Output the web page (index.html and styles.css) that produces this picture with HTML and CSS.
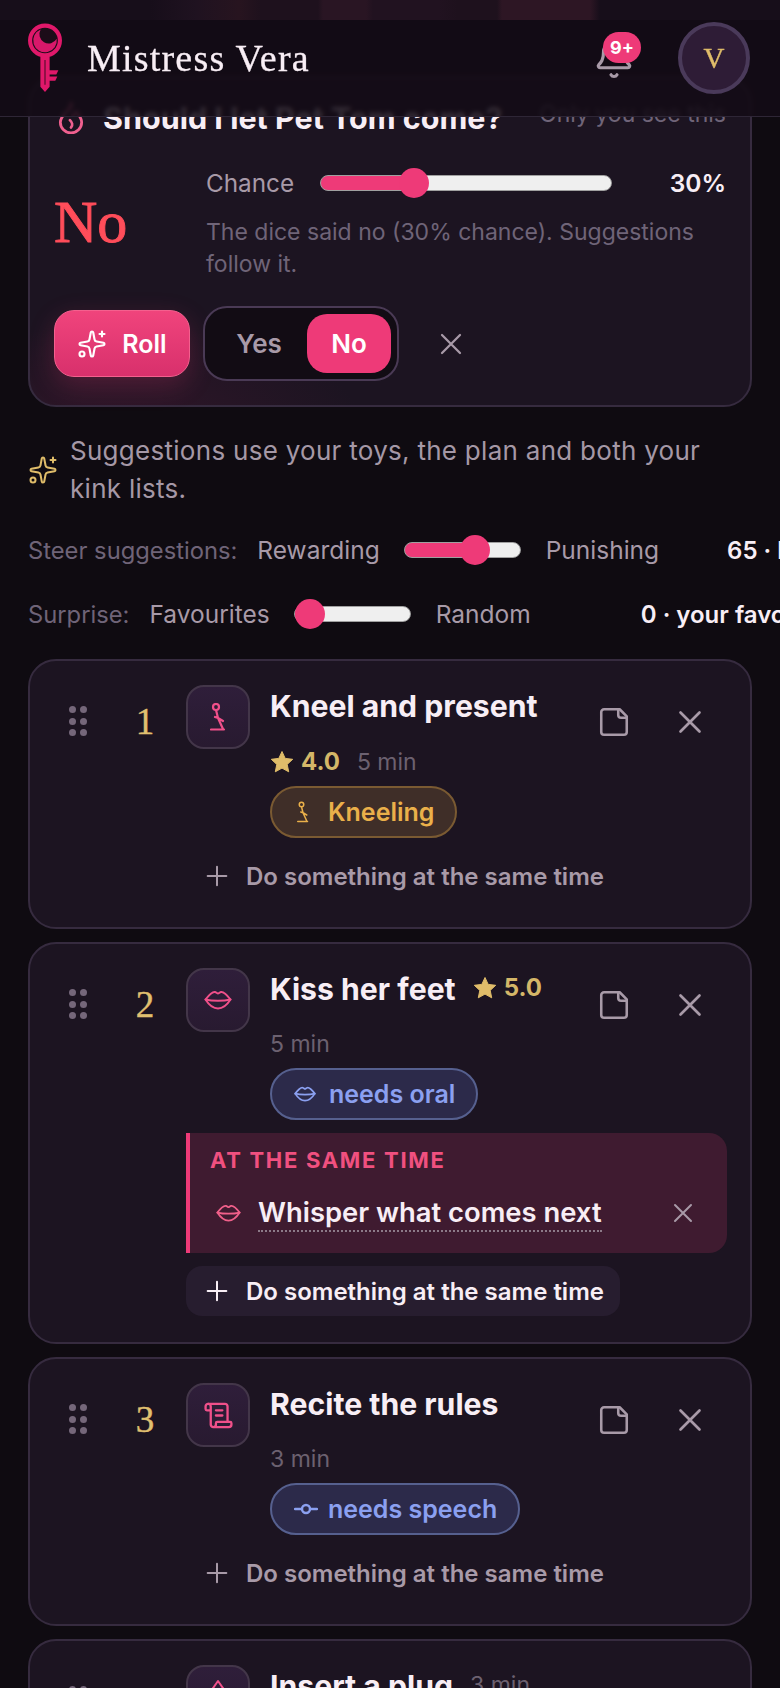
FILE: index.html
```html
<!DOCTYPE html>
<html lang="en">
<head>
    <meta charset="UTF-8">
    <title>Mistress Vera</title>
    <meta name="viewport" content="width=device-width, initial-scale=1.0">
    <link rel="stylesheet" href="styles.css">
</head>
<body>
    <svg class="sprite" width="0" height="0">
        <symbol id="i-x" viewBox="0 0 24 24"><path d="M18 6 6 18M6 6l12 12"/></symbol>
        <symbol id="i-plus" viewBox="0 0 24 24"><path d="M5 12h14M12 5v14"/></symbol>
        <symbol id="i-note" viewBox="0 0 24 24"><path d="M16 3H5a2 2 0 0 0-2 2v14a2 2 0 0 0 2 2h14a2 2 0 0 0 2-2V8Z"/><path d="M15 3v4a2 2 0 0 0 2 2h4"/></symbol>
        <symbol id="i-star" viewBox="0 0 24 24"><path class="solid" d="M12 1.500l3.200 6.900 7.500.9-5.500 5.100 1.500 7.400-6.700-3.700-6.700 3.700 1.500-7.400L1.300 9.300l7.500-.9z"/></symbol>
        <symbol id="i-sparkles" viewBox="0 0 24 24"><path d="M11.017 2.814a1 1 0 0 1 1.966 0l1.051 5.558a2 2 0 0 0 1.594 1.594l5.558 1.051a1 1 0 0 1 0 1.966l-5.558 1.051a2 2 0 0 0-1.594 1.594l-1.051 5.558a1 1 0 0 1-1.966 0l-1.051-5.558a2 2 0 0 0-1.594-1.594l-5.558-1.051a1 1 0 0 1 0-1.966l5.558-1.051a2 2 0 0 0 1.594-1.594z"/><path d="M20 2v4M22 4h-4"/><circle cx="4" cy="20" r="2"/></symbol>
        <symbol id="i-lips" viewBox="0 0 28 20"><path d="M1.500 9.500C5 5 9 1.500 11 2c1.500.4 2.300 1.500 3 1.500S15.500 2.400 17 2c2-.5 6 3 9.500 7.500C23 15 18 18.500 14 18.500S5 15 1.500 9.500Z"/><path d="M1.500 9.500c4 1 8.500 1.300 12.500 1.300s8.500-.3 12.500-1.300"/></symbol>
        <symbol id="i-kneel" viewBox="0 0 16 28"><circle cx="6" cy="4" r="3"/><path d="M6 7l2 8 5 3M8 15l-3-1M8 15l5 11M1 26.500h13"/></symbol>
    </svg>

    <header class="topbar">
        <div class="brand">
            <svg class="key" viewBox="0 0 34 68">
                <circle cx="17" cy="17" r="14.500" fill="#1c0c18" stroke="#e0186a" stroke-width="4"/>
                <path d="M12.800 6.300A11.500 11.500 0 1 0 28.400 15.400 9 9 0 0 1 12.800 6.300Z" fill="#d8186a"/>
                <path d="M12.500 33h9v13H30l-2 4h-6.500v2H29l-2 4h-5.500v6L17 67l-4.500-5Z" fill="#e0186a"/>
                <path d="M17 36v24" stroke="#7a0f3c" stroke-width="1.500"/>
            </svg>
            <span class="brand-name">Mistress Vera</span>
        </div>
        <div class="bell">
            <svg class="ico bell-ico" viewBox="0 0 24 24"><path d="M10.268 21a2 2 0 0 0 3.464 0"/><path d="M3.262 15.326A1 1 0 0 0 4 17h16a1 1 0 0 0 .74-1.673C19.410 13.956 18 12.499 18 8A6 6 0 0 0 6 8c0 4.499-1.411 5.956-2.738 7.326"/></svg>
            <span class="badge">9+</span>
        </div>
        <div class="avatar">V</div>
    </header>

    <main class="page">
        <section class="card decide">
            <div class="decide-head">
                <svg class="ico flame" viewBox="0 0 24 30"><path d="M12 1c1 4-2 6-5 9-3 3-5 6-5 9a10 10 0 0 0 20 0c0-4-3-7-5-10-1 2-2 3-4 3"/><path d="M11 17c2 2 3 5 1 7"/></svg>
                <h2>Should I let Pet Tom come?</h2>
                <span class="private">Only you see this</span>
            </div>
            <div class="dice">
                <div class="verdict">No</div>
                <div class="dice-info">
                    <div class="chance">
                        <span class="chance-label">Chance</span>
                        <input class="range range-lg" type="range" min="0" max="100" value="30" style="--fill:32%">
                        <span class="chance-val">30%</span>
                    </div>
                    <p class="dice-note">The dice said no (30% chance). Suggestions follow it.</p>
                </div>
            </div>
            <div class="decide-actions">
                <button class="roll"><svg class="ico"><use href="#i-sparkles"/></svg>Roll</button>
                <div class="segment">
                    <button class="seg-btn">Yes</button>
                    <button class="seg-btn seg-on">No</button>
                </div>
                <button class="icon-btn clear"><svg class="ico"><use href="#i-x"/></svg></button>
            </div>
        </section>

        <div class="hint">
            <svg class="ico"><use href="#i-sparkles"/></svg>
            <p>Suggestions use your toys, the plan and both your kink lists.</p>
        </div>

        <div class="steer">
            <span class="steer-name">Steer suggestions:</span>
            <span class="steer-end">Rewarding</span>
            <input class="range range-sm" type="range" min="0" max="100" value="65" style="--fill:60%">
            <span class="steer-end">Punishing</span>
            <span class="steer-val steer-val-a">65 · leaning punishing</span>
        </div>
        <div class="steer steer-2">
            <span class="steer-name">Surprise:</span>
            <span class="steer-end">Favourites</span>
            <input class="range range-sm" type="range" min="0" max="100" value="0" style="--fill:10%">
            <span class="steer-end">Random</span>
            <span class="steer-val steer-val-b">0 · your favourites</span>
        </div>

        <ol class="tasks">
            <li class="card task">
                <div class="rail"><span class="dots"><i></i><i></i><i></i><i></i><i></i><i></i></span><span class="num">1</span></div>
                <div class="task-main">
                    <div class="task-top">
                        <div class="task-icon"><svg class="ico kneel"><use href="#i-kneel"/></svg></div>
                        <div class="task-info">
                            <div class="task-line">
                                <h3>Kneel and present</h3>
                                <span class="rating"><svg class="star"><use href="#i-star"/></svg>4.0</span>
                                <span class="mins">5 min</span>
                            </div>
                            <span class="chip chip-amber"><svg class="ico"><use href="#i-kneel"/></svg>Kneeling</span>
                        </div>
                        <div class="task-actions">
                            <button class="icon-btn"><svg class="ico"><use href="#i-note"/></svg></button>
                            <button class="icon-btn"><svg class="ico"><use href="#i-x"/></svg></button>
                        </div>
                    </div>
                    <button class="add"><svg class="ico"><use href="#i-plus"/></svg>Do something at the same time</button>
                </div>
            </li>

            <li class="card task">
                <div class="rail"><span class="dots"><i></i><i></i><i></i><i></i><i></i><i></i></span><span class="num">2</span></div>
                <div class="task-main">
                    <div class="task-top">
                        <div class="task-icon"><svg class="ico lips"><use href="#i-lips"/></svg></div>
                        <div class="task-info">
                            <div class="task-line">
                                <h3>Kiss her feet</h3>
                                <span class="rating"><svg class="star"><use href="#i-star"/></svg>5.0</span>
                                <span class="mins">5 min</span>
                            </div>
                            <span class="chip chip-blue"><svg class="ico chip-lips"><use href="#i-lips"/></svg>needs oral</span>
                        </div>
                        <div class="task-actions">
                            <button class="icon-btn"><svg class="ico"><use href="#i-note"/></svg></button>
                            <button class="icon-btn"><svg class="ico"><use href="#i-x"/></svg></button>
                        </div>
                    </div>
                    <div class="same-time">
                        <div class="same-label">AT THE SAME TIME</div>
                        <div class="same-row">
                            <svg class="ico same-lips"><use href="#i-lips"/></svg>
                            <span class="same-name">Whisper what comes next</span>
                            <button class="icon-btn same-x"><svg class="ico"><use href="#i-x"/></svg></button>
                        </div>
                    </div>
                    <button class="add add-on"><svg class="ico"><use href="#i-plus"/></svg>Do something at the same time</button>
                </div>
            </li>

            <li class="card task">
                <div class="rail"><span class="dots"><i></i><i></i><i></i><i></i><i></i><i></i></span><span class="num">3</span></div>
                <div class="task-main">
                    <div class="task-top">
                        <div class="task-icon">
                            <svg class="ico scroll" viewBox="0 0 24 24"><path d="M15 12h-5M15 8h-5M19 17V5a2 2 0 0 0-2-2H4"/><path d="M8 21h12a2 2 0 0 0 2-2v-1a1 1 0 0 0-1-1H11a1 1 0 0 0-1 1v1a2 2 0 1 1-4 0V5a2 2 0 1 0-4 0v2a1 1 0 0 0 1 1h3"/></svg>
                        </div>
                        <div class="task-info">
                            <div class="task-line">
                                <h3>Recite the rules</h3>
                                <span class="mins">3 min</span>
                            </div>
                            <span class="chip chip-blue"><svg class="ico chip-speech" viewBox="0 0 24 24"><circle cx="12" cy="12" r="4"/><path d="M1 12h7M16 12h7"/></svg>needs speech</span>
                        </div>
                        <div class="task-actions">
                            <button class="icon-btn"><svg class="ico"><use href="#i-note"/></svg></button>
                            <button class="icon-btn"><svg class="ico"><use href="#i-x"/></svg></button>
                        </div>
                    </div>
                    <button class="add"><svg class="ico"><use href="#i-plus"/></svg>Do something at the same time</button>
                </div>
            </li>

            <li class="card task">
                <div class="rail"><span class="dots"><i></i><i></i><i></i><i></i><i></i><i></i></span><span class="num">4</span></div>
                <div class="task-main">
                    <div class="task-top">
                        <div class="task-icon"><svg class="ico plug" viewBox="0 0 24 36"><path d="M12 2l7 10-4 6h-6l-4-6zM12 18v8M5 30h14"/></svg></div>
                        <div class="task-info">
                            <div class="task-line">
                                <h3>Insert a plug</h3>
                                <span class="mins">3 min</span>
                            </div>
                        </div>
                        <div class="task-actions">
                            <button class="icon-btn"><svg class="ico"><use href="#i-note"/></svg></button>
                            <button class="icon-btn"><svg class="ico"><use href="#i-x"/></svg></button>
                        </div>
                    </div>
                </div>
            </li>
        </ol>
    </main>
</body>
</html>
```

FILE: styles.css
```css
* { box-sizing: border-box; }
html, body { margin: 0; height: 1688px; overflow: hidden; }
body { background: #0f0b11; color: #f8eef5; font-family: Inter, "Noto Sans", sans-serif; }
h2, h3, p { margin: 0; }
button { font-family: inherit; border: none; background: none; color: inherit; padding: 0; cursor: pointer; }
.sprite { position: absolute; }

.ico { fill: none; stroke: currentColor; stroke-width: 2; stroke-linecap: round; stroke-linejoin: round; }
.solid { fill: currentColor; stroke: currentColor; stroke-width: 1; }

/* header sits over the scrolled page */
.topbar {
    position: absolute; top: 0; left: 0; right: 0; z-index: 5;
    height: 117px; padding: 0 30px 0 27px;
    display: flex; align-items: center;
    border-bottom: 1px solid #2e2636;
    background:
        linear-gradient(to right, #170e1a 150px, #1f1220 196px, #27141f 239px, #1e111d 261px, #1e111d 318px, #291523 323px, #291523 366px, #211220 373px, #211220 438px, #1e111d 458px, #1e111d 497px, #2d1624 502px, #2d1624 590px, #170e1a 600px) top / 100% 20px no-repeat,
        rgba(19, 12, 22, 0.87);
    backdrop-filter: blur(2px);
}
.brand { display: flex; align-items: center; gap: 24px; flex: 1; }
.key { width: 36px; height: 70px; }
.brand-name { font-family: "Liberation Serif", serif; font-size: 38px; letter-spacing: 1.200px; color: #f8eef5; -webkit-text-stroke: 0.3px #f8eef5; }
.bell { position: relative; width: 42px; height: 42px; margin-right: 43px; margin-top: 2px; color: #a89aa8; }
.bell-ico { width: 42px; height: 42px; stroke-width: 1.800; }
.badge {
    position: absolute; top: -6px; left: 10px; width: 38px; height: 31px; border-radius: 16px;
    background: #ee3a78; color: #fff; font-size: 18px; font-weight: 700;
    display: flex; align-items: center; justify-content: center;
}
.avatar {
    width: 72px; height: 72px; border-radius: 50%;
    background: #2e1c36; border: 4px solid #4a3a5a; color: #e0bd6a;
    font-family: "Liberation Serif", serif; font-size: 29px; -webkit-text-stroke: 0.4px #e0bd6a;
    display: flex; align-items: center; justify-content: center;
}

.page { padding: 76px 28px 0 28px; width: 780px; }
.card { background: #1c1421; border: 2px solid #362b3f; border-radius: 28px; }

/* decision card */
.decide { padding: 22px 24px 24px; background: radial-gradient(240px 100px at 90px 345px, #301629, transparent), #1c1421; }
.decide-head { display: flex; align-items: center; height: 36px; }
.flame { width: 26px; height: 32px; margin: 0 19px 0 4px; color: #f0608f; stroke-width: 2.600; flex: none; }
.decide-head h2 { font-size: 30.500px; font-weight: 700; line-height: 36px; white-space: nowrap; }
.private { margin-left: auto; font-size: 23px; color: #6f6478; margin-bottom: 8px; white-space: nowrap; }
.dice { display: flex; align-items: center; margin-top: 31px; }
.verdict {
    width: 152px; flex: none; padding-bottom: 4px;
    font-family: "Liberation Serif", serif; font-size: 60px; line-height: 1; color: #ff4d5a; -webkit-text-stroke: 0.9px #ff4d5a;
}
.dice-info { flex: 1; }
.chance { display: flex; align-items: center; height: 32px; }
.chance-label { width: 114px; font-size: 24.300px; color: #a89aa8; }
.chance-val { margin-left: auto; font-size: 24.500px; font-weight: 600; color: #f8eef5; }
.dice-note { margin-top: 17px; font-size: 23px; line-height: 32px; color: #6f6478; }
.decide-actions { display: flex; align-items: center; margin-top: 26px; }
.roll {
    width: 136px; height: 67px; border-radius: 20px;
    display: flex; align-items: center; justify-content: center; gap: 15px;
    background: linear-gradient(#f0447c, #d8306c); border: 1px solid #f4608e;
    box-shadow: 0 8px 26px rgba(238, 58, 120, 0.22);
    color: #fff; font-size: 25px; font-weight: 600;
}
.roll .ico { width: 30px; height: 30px; stroke-width: 1.700; }
.segment {
    margin-left: 13px; height: 75px; width: 196px; padding: 6px;
    display: flex; align-items: center;
    background: #120c14; border: 2px solid #4a3a55; border-radius: 24px;
}
.seg-btn { flex: 1; height: 59px; font-size: 26px; font-weight: 600; color: #a89aa8; border-radius: 20px; }
.seg-on { flex: none; width: 84px; background: #ee3a78; color: #fff; }
.icon-btn { width: 54px; height: 54px; display: flex; align-items: center; justify-content: center; color: #a89aa8; flex: none; }
.clear { margin-left: 25px; }
.clear .ico { width: 36px; height: 36px; stroke-width: 1.500; }

/* hint and steering */
.hint { display: flex; align-items: center; gap: 12px; margin-top: 25px; color: #a598a6; }
.hint .ico { width: 30px; height: 30px; flex: none; color: #e0bd6a; stroke-width: 1.600; }
.hint p { font-size: 26px; line-height: 38px; letter-spacing: 0.280px; }
.steer { display: flex; align-items: center; height: 32px; margin-top: 26px; white-space: nowrap; font-size: 24px; }
.steer-2 { margin-top: 32px; }
.steer-name { color: #6f6478; margin-right: 20px; font-size: 23.750px; }
.steer-end { color: #a89aa8; font-size: 24.500px; }
.steer-val { font-weight: 600; color: #f8eef5; }
.steer-val-a { margin-left: 68px; }
.steer-val-b { margin-left: 110px; }

.range { -webkit-appearance: none; appearance: none; display: block; height: 30px; margin: 0; background: transparent; flex: none; }
.range-lg { width: 292px; }
.range-sm { width: 117px; margin: 0 25px 0 24px; }
.range::-webkit-slider-runnable-track {
    height: 16px; border-radius: 8px; border: 1px solid #a0a0a0;
    background: linear-gradient(to right, #ee3a78 var(--fill), #efefef var(--fill));
}
.range::-webkit-slider-thumb {
    -webkit-appearance: none; width: 30px; height: 30px; margin-top: -8px;
    border-radius: 50%; background: #ee3a78;
}

/* plan */
.tasks { list-style: none; margin: 29px 0 0; padding: 0; display: flex; flex-direction: column; gap: 13px; }
.task { display: flex; padding: 24px 23px 26px 0; }
.rail { width: 156px; flex: none; display: flex; align-items: flex-start; padding: 21px 0 0 39px; }
.dots { width: 18px; display: grid; grid-template-columns: 7px 7px; gap: 4.700px 3.500px; }
.dots i { width: 7px; height: 7px; border-radius: 50%; background: #75677a; }
.num {
    margin-left: 48px; margin-top: -6px; width: 20px; text-align: center;
    font-family: "Liberation Serif", serif; font-size: 37px; line-height: 44px; color: #e0c070; -webkit-text-stroke: 0.4px #e0c070;
}
.task-main { flex: 1; min-width: 0; }
.task-top { display: flex; align-items: flex-start; }
.task-icon {
    width: 64px; height: 64px; flex: none; border-radius: 18px;
    display: flex; align-items: center; justify-content: center;
    background: linear-gradient(#2f1e3a, #281a30); border: 2px solid #433649; color: #f0508a;
}
.kneel { width: 16px; height: 28px; stroke-width: 2.200; }
.lips { width: 28px; height: 20px; }
.scroll { width: 31px; height: 31px; stroke-width: 1.800; }
.plug { width: 24px; height: 36px; }
.task-info { width: 290px; margin-left: 20px; flex: none; }
.task-line { display: flex; flex-wrap: wrap; align-items: center; column-gap: 17px; row-gap: 22px; }
.task-line h3 { font-size: 30.200px; font-weight: 700; line-height: 36px; margin-top: 3px; white-space: nowrap; }
.rating { display: inline-flex; align-items: center; gap: 7px; font-size: 24px; font-weight: 700; line-height: 31px; color: #d4b768; }
.star { width: 24px; height: 24px; color: #e0bd6a; }
.mins { font-size: 23px; line-height: 30px; color: #6c6170; }
.chip {
    display: inline-flex; align-items: center; height: 52px; margin-top: 9px; padding: 0 21px 0 22px;
    border-radius: 26px; border: 2px solid; font-size: 25px; font-weight: 600; white-space: nowrap;
}
.chip-amber { background: #3f2e28; border-color: #7a5a32; color: #eab04a; padding-left: 25px; }
.chip-amber .ico { width: 12px; height: 22px; margin-right: 19px; }
.chip-blue { background: #2c2a4a; border-color: #56608f; color: #8ba0f0; }
.chip-lips { width: 22px; height: 16px; margin-right: 13px; stroke-width: 2.200; }
.chip-speech { width: 24px; height: 24px; margin-right: 10px; stroke-width: 2.400; }
.task-actions { display: flex; gap: 22px; margin-left: auto; margin-right: 10px; margin-top: 10px; }
.task-actions .icon-btn .ico { width: 34px; height: 34px; stroke-width: 1.800; }
.task-actions .icon-btn:last-child .ico { width: 38px; height: 38px; stroke-width: 1.700; }

.add {
    display: flex; align-items: center; height: 50px; width: 434px; margin-top: 13px; padding-left: 15px; border-radius: 16px;
    color: #a89aa8; font-size: 24px; font-weight: 600; white-space: nowrap;
}
.add .ico { width: 32px; height: 32px; margin-right: 13px; stroke-width: 1.500; }
.add-on { background: #271d2f; color: #f8eef5; }
.same-time {
    margin-top: 13px; height: 120px; padding: 12px 0 0 20px;
    background: #3f1b30; border-left: 4px solid #ee3a78; border-radius: 0 18px 18px 0;
}
.same-label { font-size: 22px; line-height: 30px; font-weight: 700; letter-spacing: 1.700px; color: #f0507f; }
.same-row { display: flex; align-items: center; margin-top: 16px; height: 44px; }
.same-lips { width: 25px; height: 18px; margin: 0 17px 0 6px; color: #f0608a; }
.same-name { font-size: 27.400px; font-weight: 600; border-bottom: 2px dotted #8c7a88; line-height: 36px; }
.same-x { margin-left: auto; margin-right: 24px; width: 40px; height: 40px; }
.same-x .ico { width: 32px; height: 32px; stroke-width: 1.500; }
```
